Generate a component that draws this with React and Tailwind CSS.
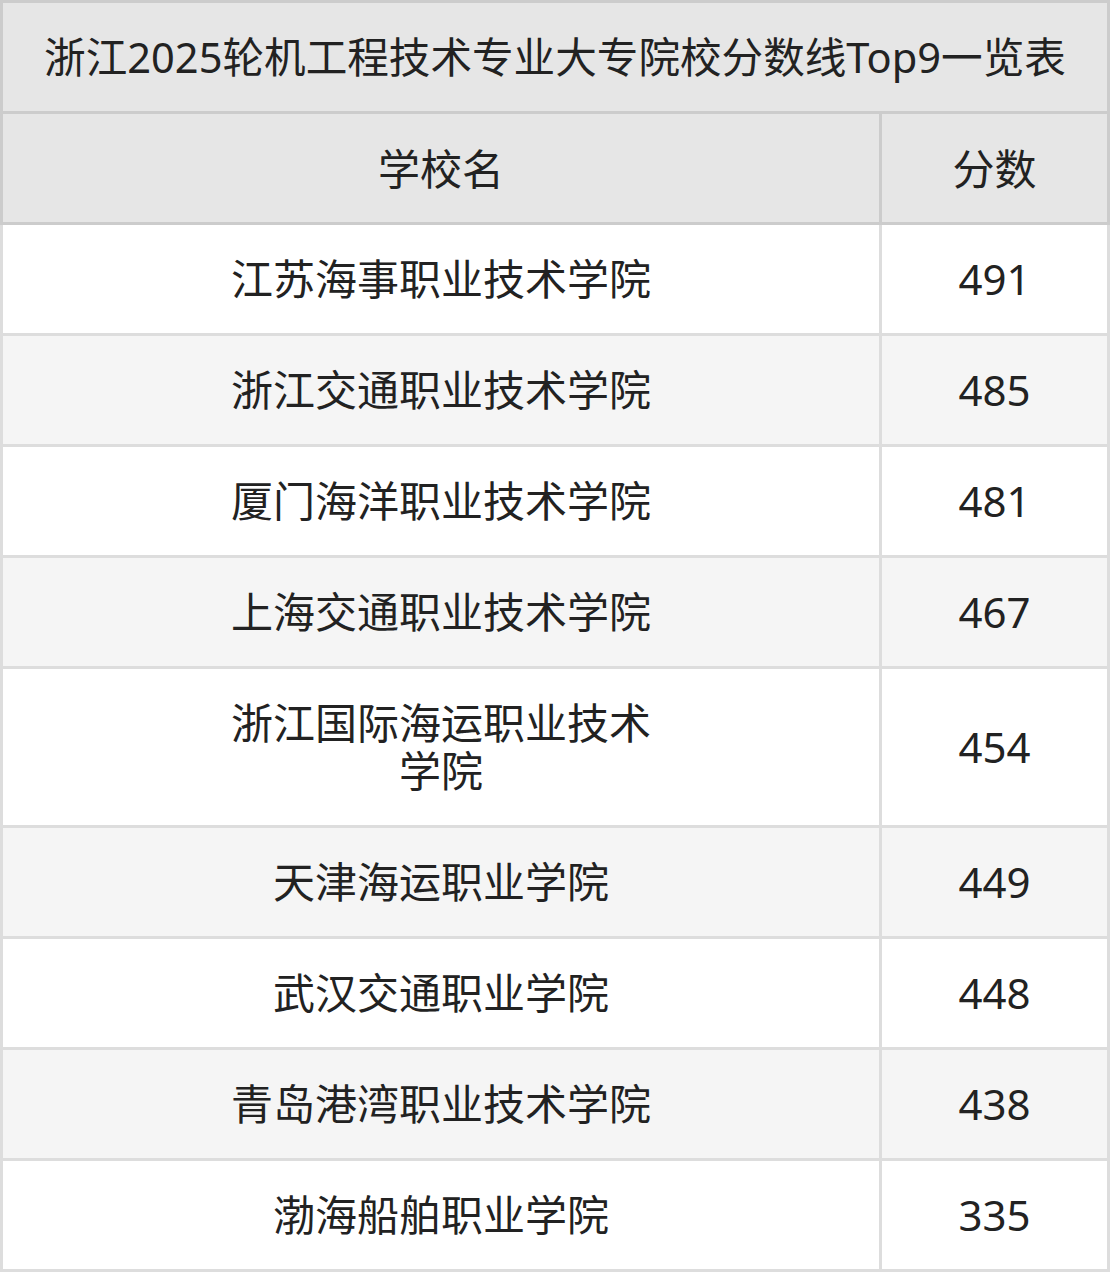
import React from 'react';

const rows = [
  { name: '江苏海事职业技术学院', score: 491 },
  { name: '浙江交通职业技术学院', score: 485 },
  { name: '厦门海洋职业技术学院', score: 481 },
  { name: '上海交通职业技术学院', score: 467 },
  { name: '浙江国际海运职业技术学院', score: 454 },
  { name: '天津海运职业学院', score: 449 },
  { name: '武汉交通职业学院', score: 448 },
  { name: '青岛港湾职业技术学院', score: 438 },
  { name: '渤海船舶职业学院', score: 335 },
];

const App = () => {
  return (
    <div
      className="w-[1110px] text-[42px] leading-[48px] text-[#222]"
      style={{ fontFamily: '"Noto Sans", "Noto Sans CJK SC", sans-serif' }}
    >
      {/* title */}
      <div className="border-[3px] border-[#cccccc] bg-[#e6e6e6] py-[30px] text-center text-[41.6px]">
        浙江2025轮机工程技术专业大专院校分数线Top9一览表
      </div>

      {/* header */}
      <div className="flex border-x-[3px] border-b-[3px] border-[#cccccc] bg-[#e6e6e6]">
        <div className="w-[879px] border-r-[3px] border-[#cccccc] pt-[31px] pb-[29px] text-center">学校名</div>
        <div className="flex-1 pt-[31px] pb-[29px] text-center">分数</div>
      </div>

      {rows.map((row, i) => (
        <div
          key={row.name}
          className={`flex border-x-[3px] border-b-[3px] border-[#dddddd] ${i % 2 === 1 ? 'bg-[#f5f5f5]' : 'bg-white'}`}
        >
          <div className="w-[879px] border-r-[3px] border-[#dddddd] py-[30px] text-center">
            <div className="mx-auto max-w-[430px]">{row.name}</div>
          </div>
          <div className="flex flex-1 items-center justify-center py-[30px]">{row.score}</div>
        </div>
      ))}
    </div>
  );
};

export default App;
